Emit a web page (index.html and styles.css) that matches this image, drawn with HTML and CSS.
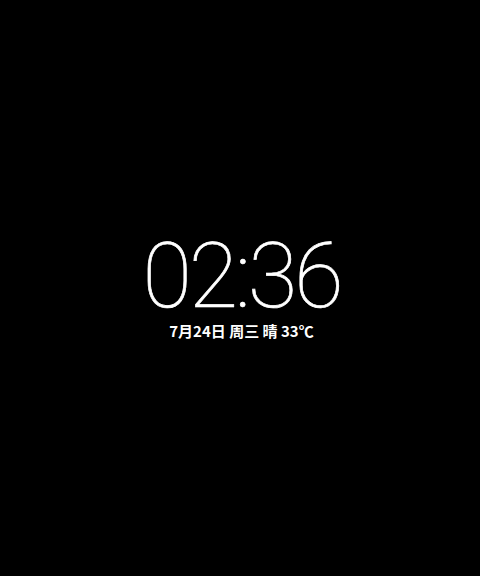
FILE: index.html
```html
<!DOCTYPE html>
<html lang="zh">
<head>
<meta charset="utf-8">
<link rel="stylesheet" href="styles.css">
</head>
<body>
<main class="screen">
  <div class="clock">
    <div class="time">02:36</div>
    <div class="date">7月24日 周三 晴 33℃</div>
  </div>
</main>
</body>
</html>
```
FILE: styles.css
```css
html, body {
  margin: 0;
  padding: 0;
  background: #000;
}
.screen {
  width: 480px;
  height: 576px;
  display: flex;
  justify-content: center;
  padding-top: 237px;
  box-sizing: border-box;
}
.clock {
  display: flex;
  flex-direction: column;
  align-items: center;
}
.time {
  font-family: Roboto, sans-serif;
  font-weight: 100;
  font-size: 90px;
  line-height: 80px;
  color: #fff;
  letter-spacing: -3px;
  padding-left: 3px;
  -webkit-text-stroke: 0.7px #fff;
}
.date {
  font-family: "Noto Sans CJK SC", sans-serif;
  font-weight: 700;
  font-size: 15px;
  line-height: 20px;
  color: #fff;
  margin-top: 4px;
  padding-left: 3px;
}
```
